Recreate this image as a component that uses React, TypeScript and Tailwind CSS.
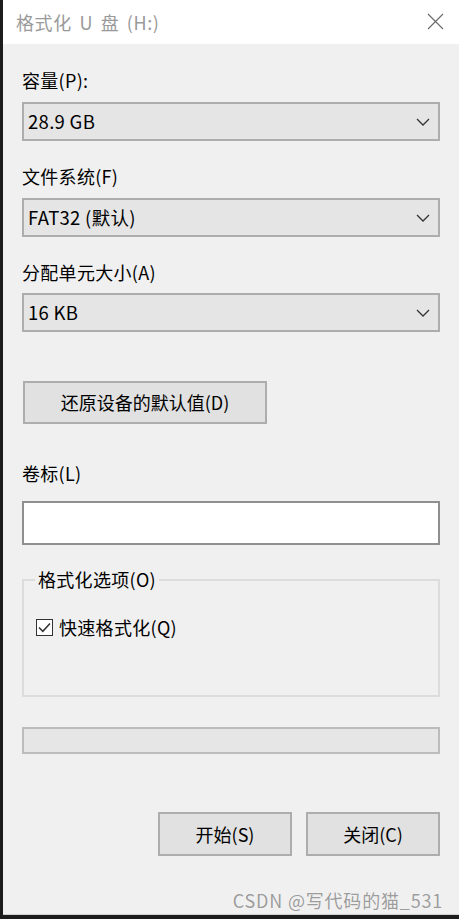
import React from "react";

const font = { fontFamily: '"Noto Sans CJK SC", "Noto Sans", sans-serif' };

function Chevron() {
  return (
    <svg width="14" height="8" viewBox="0 0 14 8" fill="none">
      <path d="M1 1l6 6 6-6" stroke="#333" strokeWidth="1.3" />
    </svg>
  );
}

function Select({ value }: { value: string }) {
  return (
    <div className="h-[39px] border-2 border-[#adadad] bg-[#e5e5e5] flex items-center justify-between pl-[4px] pr-[8px]">
      <span className="text-[18.5px] text-black leading-none tracking-[0.3px]">{value}</span>
      <Chevron />
    </div>
  );
}

function Label({ children, className = "" }: { children: React.ReactNode; className?: string }) {
  return <div className={`text-[18px] leading-[24px] text-black tracking-[0.3px] ${className}`}>{children}</div>;
}

function Button({ children, className = "" }: { children: React.ReactNode; className?: string }) {
  return (
    <button className={`border-2 border-[#adadad] bg-[#e1e1e1] text-[18px] text-black flex items-center justify-center ${className}`}>
      {children}
    </button>
  );
}

export default function App() {
  return (
    <div className="w-[459px] h-[919px] bg-[#1c1c1c] pl-[3px] pb-[4px]" style={font}>
      <div className="h-full bg-[#f0f0f0] flex flex-col border-b border-[#d0d0d0]">
        {/* Title bar */}
        <div className="h-[44px] bg-white flex items-center justify-between pl-[13px] pr-[15px] shrink-0">
          <span className="text-[18px] text-[#9a9a9a] tracking-[0.6px] [word-spacing:3px]">格式化 U 盘 (H:)</span>
          <svg width="17" height="17" viewBox="0 0 17 17" className="mb-[1px]">
            <path d="M1 1l15 15M16 1L1 16" stroke="#6b6b6b" strokeWidth="1.2" />
          </svg>
        </div>

        {/* Body */}
        <div className="flex flex-col px-[19px] pt-[24px]">
          <Label>容量(P):</Label>
          <div className="mt-[10px]">
            <Select value="28.9 GB" />
          </div>

          <Label className="mt-[23px]">文件系统(F)</Label>
          <div className="mt-[10px]">
            <Select value="FAT32 (默认)" />
          </div>

          <Label className="mt-[23px]">分配单元大小(A)</Label>
          <div className="mt-[9px]">
            <Select value="16 KB" />
          </div>

          <Button className="mt-[49px] ml-[1px] w-[244px] h-[43px]">还原设备的默认值(D)</Button>

          <Label className="mt-[37px]">卷标(L)</Label>
          <div className="mt-[16px] h-[44px] bg-white border-2 border-[#8f8f8f]" />

          {/* Group box */}
          <div className="relative mt-[34px] h-[118px] border-2 border-[#dcdcdc]">
            <span className="absolute left-[11px] -top-[14px] bg-[#f0f0f0] px-[3px] text-[18px] leading-[24px] text-black tracking-[0.3px]">
              格式化选项(O)
            </span>
            <div className="flex items-center gap-[6px] mt-[34px] ml-[12px]">
              <div className="w-[17px] h-[17px] border-[1.5px] border-[#333] bg-white flex items-center justify-center">
                <svg width="13" height="11" viewBox="0 0 13 11" fill="none">
                  <path d="M1 5.5l3.8 3.8L12 1.5" stroke="#333" strokeWidth="1.5" />
                </svg>
              </div>
              <span className="text-[18px] leading-[24px] text-black tracking-[0.3px]">快速格式化(Q)</span>
            </div>
          </div>

          {/* Progress bar */}
          <div className="mt-[30px] h-[27px] bg-[#e6e6e6] border-2 border-[#bcbcbc]" />

          <div className="mt-[58px] flex justify-end gap-[14px]">
            <Button className="w-[134px] h-[44px]">开始(S)</Button>
            <Button className="w-[134px] h-[44px]">关闭(C)</Button>
          </div>

          <div className="mt-[35px] flex justify-end -mr-[3px]">
            <span className="text-[18px] leading-none text-[#9c9c9c] tracking-[0.8px] [text-shadow:0_0_1px_#ffffff]">CSDN @写代码的猫_531</span>
          </div>
        </div>
      </div>
    </div>
  );
}
